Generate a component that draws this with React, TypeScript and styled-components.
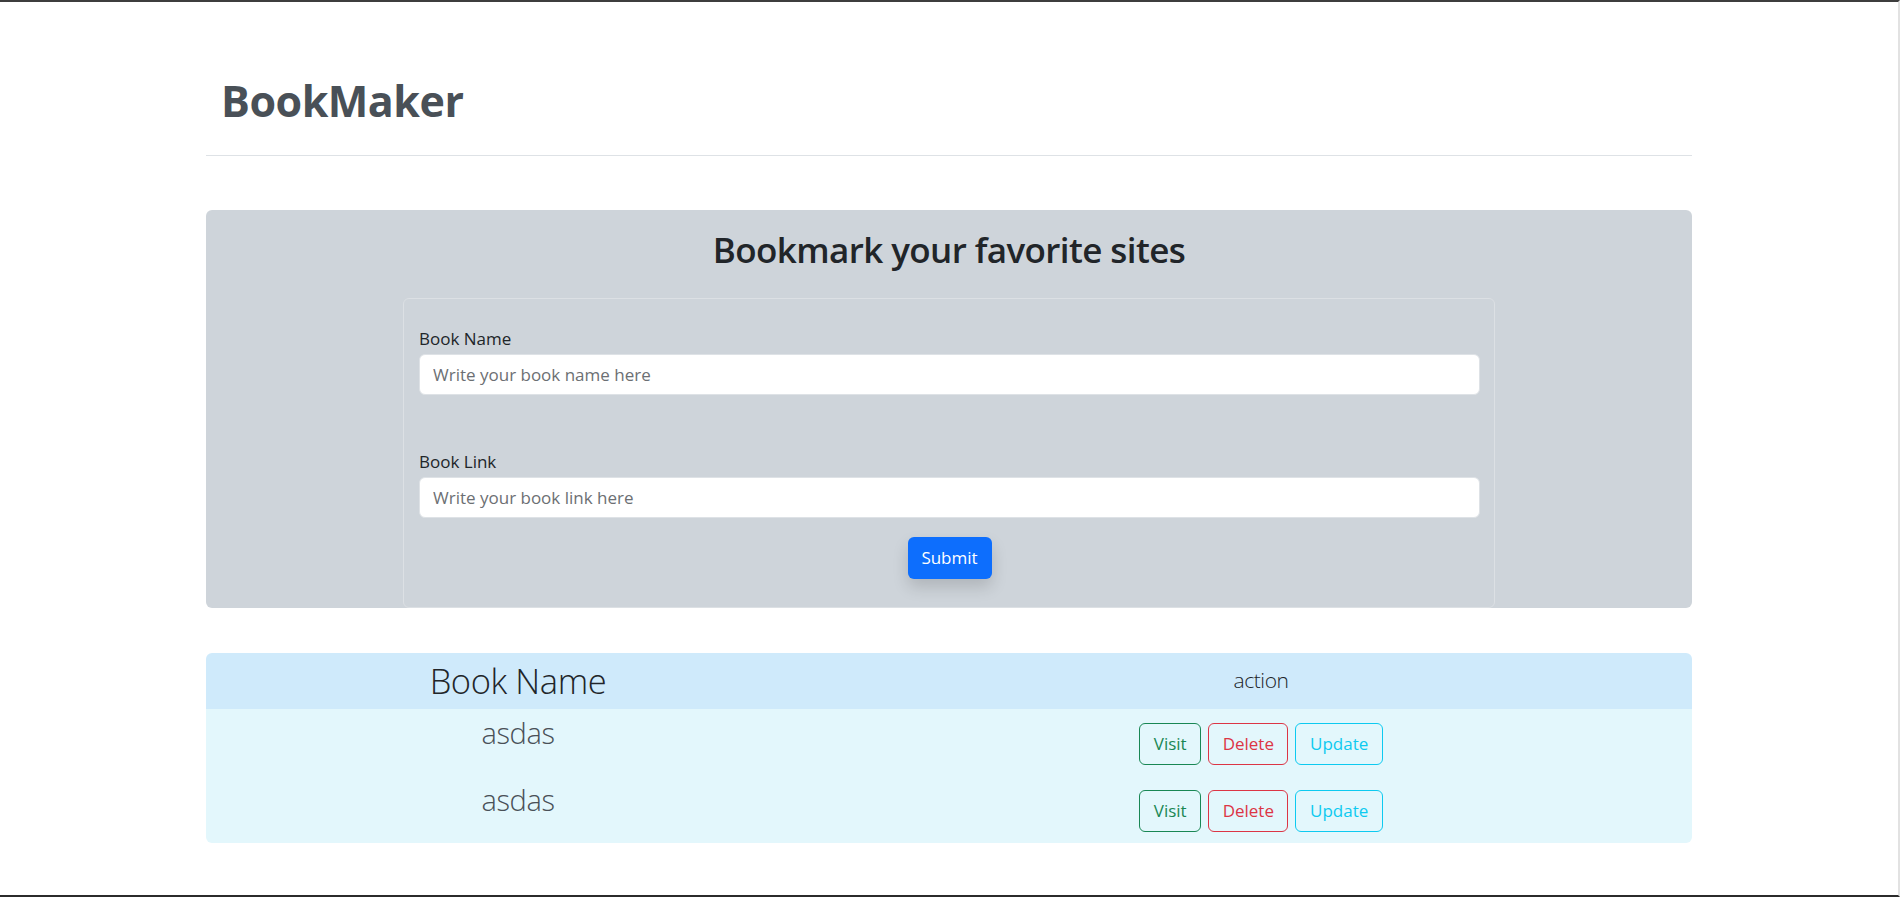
import React from 'react';
import styled, { createGlobalStyle } from 'styled-components';

const GlobalStyle = createGlobalStyle`
  * {
    box-sizing: border-box;
  }
  body {
    margin: 0;
    background: #ffffff;
    font-family: 'Open Sans', 'Noto Sans', sans-serif;
    color: #212529;
  }
`;

const Frame = styled.div`
  min-height: 100vh;
  border-top: 2px solid #3d3d3d;
  border-bottom: 2px solid #2b2b2b;
  border-right: 2px solid #e2e2e2;
`;

const Container = styled.main`
  width: 1486px;
  margin: 0 auto;
`;

const Header = styled.header`
  padding: 73px 15px 28px;
  border-bottom: 1px solid #dee2e6;
`;

const Brand = styled.h1`
  margin: 0;
  font-size: 43px;
  line-height: 1.2;
  font-weight: 700;
  color: #495057;
  letter-spacing: -0.5px;
`;

const BookmarkCard = styled.section`
  margin-top: 54px;
  padding-top: 19px;
  background: #ced4da;
  border-radius: 6px;
  display: flex;
  flex-direction: column;
  align-items: center;
`;

const CardTitle = styled.h2`
  margin: 0;
  font-size: 35px;
  line-height: 1.2;
  font-weight: 600;
  color: #212529;
  letter-spacing: -0.6px;
`;

const Form = styled.form`
  width: 1092px;
  margin-top: 27px;
  padding: 27px 14px 28px 15px;
  border: 1px solid #dce0e4;
  border-radius: 6px;
  display: flex;
  flex-direction: column;
`;

const Field = styled.div<{ $last?: boolean }>`
  display: flex;
  flex-direction: column;
  margin-bottom: ${(p) => (p.$last ? '19px' : '54px')};
`;

const Label = styled.label`
  font-size: 17px;
  line-height: 25px;
  margin-bottom: 3px;
  color: #212529;
`;

const Input = styled.input`
  height: 41px;
  padding: 0 13px;
  border: 1px solid #dee2e6;
  border-radius: 6px;
  background: #ffffff;
  font-family: inherit;
  font-size: 17px;
  color: #212529;
  outline: none;

  &::placeholder {
    color: #6c6f73;
  }
`;

const SubmitButton = styled.button`
  align-self: center;
  width: 84px;
  height: 42px;
  border: none;
  border-radius: 6px;
  background: #0d6efd;
  color: #ffffff;
  font-family: inherit;
  font-size: 17px;
  box-shadow: 0 8px 16px rgba(0, 0, 0, 0.15);
  cursor: pointer;
`;

const Table = styled.section`
  margin-top: 45px;
  border-radius: 6px;
  overflow: hidden;
`;

const Row = styled.div<{ $head?: boolean }>`
  display: grid;
  grid-template-columns: 624px 1fr;
  align-items: ${(p) => (p.$head ? 'center' : 'start')};
  height: ${(p) => (p.$head ? '56px' : '67px')};
  padding-top: ${(p) => (p.$head ? '0' : '14px')};
  background: ${(p) => (p.$head ? '#cfeafb' : '#e3f7fc')};
`;

const HeadCell = styled.div<{ $size: number }>`
  text-align: center;
  font-size: ${(p) => p.$size}px;
  font-weight: 300;
  line-height: 1.2;
  color: #212529;
  letter-spacing: -0.4px;
`;

const NameCell = styled.div`
  text-align: center;
  font-size: 29px;
  font-weight: 300;
  line-height: 1.2;
  margin-top: -7px;
  color: #495057;
  letter-spacing: -0.4px;
`;

const Actions = styled.div`
  display: flex;
  justify-content: center;
  gap: 7px;
`;

const OutlineButton = styled.button<{ $color: string }>`
  height: 42px;
  padding: 0 13.5px;
  border: 1px solid ${(p) => p.$color};
  border-radius: 6px;
  background: transparent;
  color: ${(p) => p.$color};
  font-family: inherit;
  font-size: 17px;
  font-weight: 400;
  cursor: pointer;
`;

const books = [{ name: 'asdas' }, { name: 'asdas' }];

export default function App(): JSX.Element {
  return (
    <>
      <GlobalStyle />
      <Frame>
        <Container>
          <Header>
            <Brand>BookMaker</Brand>
          </Header>

          <BookmarkCard>
            <CardTitle>Bookmark your favorite sites</CardTitle>
            <Form onSubmit={(e) => e.preventDefault()}>
              <Field>
                <Label htmlFor="bookName">Book Name</Label>
                <Input id="bookName" placeholder="Write your book name here" />
              </Field>
              <Field $last>
                <Label htmlFor="bookLink">Book Link</Label>
                <Input id="bookLink" placeholder="Write your book link here" />
              </Field>
              <SubmitButton type="submit">Submit</SubmitButton>
            </Form>
          </BookmarkCard>

          <Table>
            <Row $head>
              <HeadCell $size={34.5}>Book Name</HeadCell>
              <HeadCell $size={21}>action</HeadCell>
            </Row>
            {books.map((book, index) => (
              <Row key={index}>
                <NameCell>{book.name}</NameCell>
                <Actions>
                  <OutlineButton $color="#198754">Visit</OutlineButton>
                  <OutlineButton $color="#dc3545">Delete</OutlineButton>
                  <OutlineButton $color="#0dcaf0">Update</OutlineButton>
                </Actions>
              </Row>
            ))}
          </Table>
        </Container>
      </Frame>
    </>
  );
}
